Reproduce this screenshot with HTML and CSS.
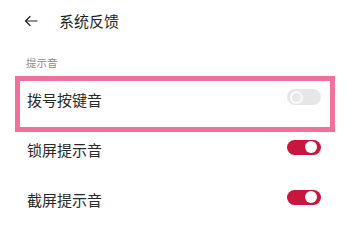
FILE: index.html
```html
<!DOCTYPE html>
<html lang="zh-CN">
<head>
    <meta charset="UTF-8">
    <meta name="viewport" content="width=device-width, initial-scale=1.0">
    <title>系统反馈</title>
    <link rel="stylesheet" href="styles.css">
</head>
<body>
    <div class="header">
        <svg class="back" width="14" height="12" viewBox="0 0 14 12">
            <path d="M13 6H1.5M6 1.5L1.5 6l4.5 4.5" fill="none" stroke="#222" stroke-width="1.2" stroke-linecap="round" stroke-linejoin="round"/>
        </svg>
        <span class="title">系统反馈</span>
    </div>

    <div class="section-label">提示音</div>

    <div class="list">
        <div class="row marked">
            <span class="label">拨号按键音</span>
            <span class="switch"></span>
        </div>
        <div class="row">
            <span class="label">锁屏提示音</span>
            <span class="switch on"></span>
        </div>
        <div class="row">
            <span class="label">截屏提示音</span>
            <span class="switch on"></span>
        </div>
    </div>
</body>
</html>
```

FILE: styles.css
```css
body {
    margin: 0;
    background: #fff;
    font-family: "Noto Sans CJK SC", "Noto Sans", sans-serif;
    color: #222;
}
.header {
    height: 42px;
    display: flex;
    align-items: center;
    padding-left: 24px;
}
.back {
    margin-right: 21px;
}
.title {
    font-size: 15px;
    line-height: 20px;
    color: #1f1f1f;
}
.section-label {
    margin-top: 14px;
    padding-left: 26px;
    font-size: 10.5px;
    line-height: 14px;
    color: #8c8c8c;
}
.list {
    margin-top: 5px;
}
.row {
    position: relative;
    height: 50px;
    display: flex;
    align-items: center;
    justify-content: space-between;
    padding: 0 29px 0 27px;
}
.label {
    font-size: 15px;
    line-height: 20px;
    color: #2a2a2a;
}

/* highlight frame drawn over the first row */
.marked::after {
    content: "";
    position: absolute;
    top: 1px;
    bottom: -7px;
    left: 15px;
    right: 15px;
    border: 5px solid #f2719b;
}

.switch {
    width: 34px;
    height: 16px;
    border-radius: 8px;
    background: #e6e6e6;
    display: flex;
    align-items: center;
    padding: 0 3px;
    box-sizing: border-box;
    margin-top: -6px;
}
.switch::before {
    content: "";
    width: 13px;
    height: 13px;
    box-sizing: border-box;
    border-radius: 50%;
    border: 2px solid #fafafa;
    background: #e8e8e8;
}
.switch.on {
    height: 15px;
    border-radius: 7.5px;
    background: #c8173f;
    justify-content: flex-end;
    padding: 0 4px;
}
.switch.on::before {
    width: 12px;
    height: 12px;
    border: none;
    background: #fff;
}
```
